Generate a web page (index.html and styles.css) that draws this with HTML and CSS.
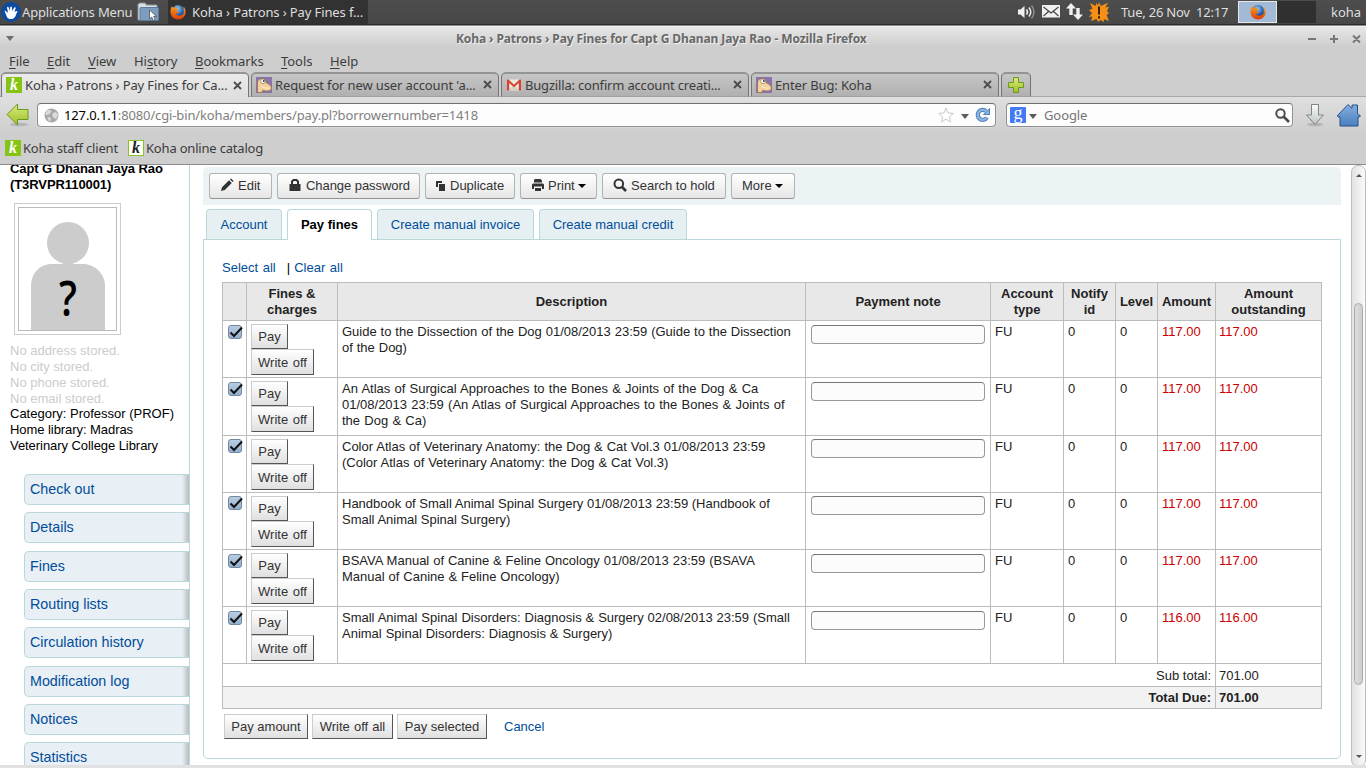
FILE: index.html
```html
<!DOCTYPE html>
<html lang="en">
<head>
  <meta charset="UTF-8" />
  <title>Koha › Patrons › Pay Fines for Capt G Dhanan Jaya Rao</title>
  <link rel="stylesheet" href="styles.css">
</head>
<body>

  <!-- Shared icons -->
  <svg class="defs" width="0" height="0">
    <defs>
      <radialGradient id="fox-blue" cx="45%" cy="30%" r="70%">
        <stop offset="0" stop-color="#8fd0f5" />
        <stop offset="0.6" stop-color="#2a62b5" />
        <stop offset="1" stop-color="#14285f" />
      </radialGradient>
      <linearGradient id="fox-orange" x1="0" y1="0" x2="0" y2="1">
        <stop offset="0" stop-color="#f9a01f" />
        <stop offset="1" stop-color="#d93c0b" />
      </linearGradient>
      <linearGradient id="green" x1="0" y1="0" x2="0" y2="1">
        <stop offset="0" stop-color="#dcea7a" />
        <stop offset="1" stop-color="#9cc02a" />
      </linearGradient>
      <linearGradient id="blue" x1="0" y1="0" x2="0" y2="1">
        <stop offset="0" stop-color="#86aedd" />
        <stop offset="1" stop-color="#4a7fbe" />
      </linearGradient>
      <linearGradient id="silver" x1="0" y1="0" x2="0" y2="1">
        <stop offset="0" stop-color="#fafafa" />
        <stop offset="1" stop-color="#bcc4c4" />
      </linearGradient>
      <symbol id="firefox" viewBox="0 0 16 16">
        <circle cx="8" cy="7.6" r="6.6" fill="url(#fox-blue)" />
        <path d="M1.6 2.2C1 4 .3 6 .5 8.6c.3 4 3.5 7 7.6 7 4.300 0 7.500-3.300 7.500-7.500 0-2.200-.8-4.400-2.200-5.600.7 1.500.8 2.600.6 4 .2 3.500-2 5.400-4.800 5.200-1.800-.1-3-1-3.400-2.300 1 .4 2.300.2 3-.6.5-.5 0-1-.7-1-.9 0-1.400-.5-1.500-1.200L8.300 5.400c.2-.6-.6-.9-1.600-1C6 3.800 6.300 3 7 2.400c-1.200.1-2.200.7-2.800 1.400-.7-.2-1.700-.4-2.600-1.600z" fill="url(#fox-orange)" />
        <path d="M13.400 2.500c.9 1.800 1.200 4 .4 6 .2-2.200 0-4-.4-6z" fill="#fdd835" />
      </symbol>
      <symbol id="bugzilla" viewBox="0 0 16 16">
        <rect width="16" height="16" fill="#8b73ab" />
        <path d="M1.500 15.500V7C1 4 3 1.500 6 1.500c3.500 0 4 2.500 4.500 4.500 3 1 5 3 5 5 0 2.500-2.500 3-5 3l-4-.5-.5 2z" fill="#f3cf9b" stroke="#8a6a45" stroke-width=".7" />
        <circle cx="7" cy="4.300" r="2.300" fill="#fff" stroke="#77684f" stroke-width=".6" />
        <circle cx="7.800" cy="4" r=".9" fill="#333" />
        <path d="M5 8.500c1 2 4 3 8 2.500" fill="none" stroke="#fff0d5" />
      </symbol>
      <symbol id="closex" viewBox="0 0 9 9">
        <path d="M1 1l7 7M8 1L1 8" stroke="#4c4c4c" stroke-width="1.800" />
      </symbol>
    </defs>
  </svg>

  <!-- Desktop panel -->
  <div class="panel">
    <svg class="xfce" width="20" height="20" viewBox="0 0 20 20">
      <circle cx="10" cy="10" r="10" fill="#0c4ba0" />
      <path d="M3.500 9c1-.8 2 .2 2.300 1.200L7 10.500 6 5.800c0-1.200 1.300-1.200 1.700-.2l1.200 3.200.3-3.600c.2-1.100 1.600-1 1.700 0l.2 3.800 2-3.200c.6-.9 1.800-.4 1.500.7l-1.200 3.500 1.900-1c1-.3 1.500.6.900 1.300-1.200 1.300-1.200 5.200-4.200 6.400-2.500.8-5 .2-6-1.700z" fill="#fff" />
    </svg>
    <span class="apps">Applications Menu</span>
    <svg class="folder" width="22" height="20" viewBox="0 0 22 20">
      <path d="M1 18V2.500L2.500 1H8l1.500 2H20v15z" fill="#d9dee0" stroke="#8c9499" />
      <rect x="3" y="5.500" width="18.500" height="13" rx="1" fill="#7d9dbf" stroke="#5a7ba0" />
      <path d="M12.500 8v9l2.200-2 1.600 3.500 1.900-.9-1.600-3.300h3z" fill="#fff" stroke="#444" stroke-width=".7" />
    </svg>
    <div class="task">
      <svg width="16" height="16"><use href="#firefox" /></svg>
      <span class="task-label">Koha › Patrons › Pay Fines f...</span>
    </div>
    <div class="tray">
      <svg width="18" height="16" viewBox="0 0 18 16">
        <path d="M0 5.500h2.500L6.500 2v12L2.500 10.500H0z" fill="#f0f0f0" />
        <path d="M8.500 5.500q2 2.500 0 5M11 3.500q3.500 4.500 0 9" fill="none" stroke="#eee" stroke-width="1.500" />
        <path d="M13.500 1.500q5 6.500 0 13" fill="none" stroke="#8d8d8d" stroke-width="1.500" />
      </svg>
      <svg class="mail" width="18" height="13" viewBox="0 0 18 13">
        <rect width="18" height="12.500" fill="#f1f1f1" />
        <path d="M1.500 2l7.500 6 7.500-6M1.500 11l5-4.500M16.500 11l-5-4.500" fill="none" stroke="#444" stroke-width="1.200" />
      </svg>
      <svg class="net" width="17" height="17" viewBox="0 0 17 17">
        <path d="M5 0l5 5.500H6.700V12H3.300V5.500H0zM12 17l5-5.500h-3.300V5h-3.400v6.500H7z" fill="#f1f1f1" />
      </svg>
      <svg class="alert" width="20" height="20" viewBox="0 0 20 20">
        <path d="M10 0l1.800 4L19 .8l-2.600 4.700 3.600-.8-2 4.300 2 2.200-2.400 1.500 2.200 6.300-5-2 .2 3-3.500-2L9 20l-1.500-3L2 19l1.500-4.500-3.500.5 3-4L0 8l3.500-1.300L1 1l5.500 3L7.500 1 9 3.500z" fill="#f58f16" />
        <path d="M10 4.500v8M10 14.200v2.200" stroke="#3a2300" stroke-width="2" />
      </svg>
      <span class="clock">Tue, 26 Nov&nbsp; 12:17</span>
      <div class="pager">
        <div class="desk active"><svg width="16" height="16"><use href="#firefox" /></svg></div>
        <div class="desk"></div>
      </div>
      <span class="user">koha</span>
    </div>
  </div>

  <!-- Window title and menu -->
  <div class="titlebar">
    <span class="win-menu"></span>
    <span class="win-title">Koha › Patrons › Pay Fines for Capt G Dhanan Jaya Rao - Mozilla Firefox</span>
    <svg class="win-buttons" width="54" height="10" viewBox="0 0 54 10">
      <path d="M1 5h8M23 5h8M27 1v8M46 1.500l7 7M53 1.500l-7 7" stroke="#777" stroke-width="2" fill="none" />
    </svg>
  </div>
  <div class="menubar">
    <span class="m-file"><u>F</u>ile</span>
    <span class="m-edit"><u>E</u>dit</span>
    <span class="m-view"><u>V</u>iew</span>
    <span class="m-history">Hi<u>s</u>tory</span>
    <span class="m-bookmarks"><u>B</u>ookmarks</span>
    <span class="m-tools"><u>T</u>ools</span>
    <span class="m-help"><u>H</u>elp</span>
  </div>

  <!-- Browser tabs -->
  <div class="tabstrip">
    <div class="tab current">
      <span class="k">k</span><span class="tab-label t1">Koha › Patrons › Pay Fines for Ca...</span>
      <svg class="close" width="9" height="9"><use href="#closex" /></svg>
    </div>
    <div class="tab">
      <svg width="16" height="16"><use href="#bugzilla" /></svg><span class="tab-label t2">Request for new user account 'a...</span>
      <svg class="close" width="9" height="9"><use href="#closex" /></svg>
    </div>
    <div class="tab">
      <svg width="16" height="16" viewBox="0 0 16 16">
        <rect x="1" y="2.500" width="14" height="11" fill="#eceadf" />
        <path d="M2 13l6-5 6 5" fill="#d5d2c2" />
        <path d="M1 13.500v-11h1.500L8 7.800l5.500-5.300H15v11h-2.200V6L8 10.200 3.200 6v7.500z" fill="#d8402f" />
      </svg><span class="tab-label t3">Bugzilla: confirm account creati...</span>
      <svg class="close" width="9" height="9"><use href="#closex" /></svg>
    </div>
    <div class="tab">
      <svg width="16" height="16"><use href="#bugzilla" /></svg><span class="tab-label t4">Enter Bug: Koha</span>
      <svg class="close" width="9" height="9"><use href="#closex" /></svg>
    </div>
    <div class="tab new">
      <svg width="16" height="16" viewBox="0 0 16 16">
        <path d="M5.500.5h5v5h5v5h-5v5h-5v-5h-5v-5h5z" fill="url(#green)" stroke="#6a9a17" />
      </svg>
    </div>
  </div>

  <!-- Location bar -->
  <div class="navbar">
    <svg class="back" width="24" height="24" viewBox="0 0 24 24">
      <ellipse cx="13" cy="21.500" rx="9" ry="1.800" fill="#b5b5b5" />
      <path d="M1 11.500L11.500 1v5.500H22v10H11.500V22z" fill="url(#green)" stroke="#699a1c" />
    </svg>
    <div class="urlbar">
      <svg class="globe" width="15" height="15" viewBox="0 0 15 15">
        <circle cx="7.500" cy="7.500" r="7" fill="#a9a9a9" />
        <path d="M3 2.500l3-.5 1.500 1.500L5.500 6 3 7 1.500 6zM9 5l3-1 2 3-2 4-2.500-1.500L8 7.500zM3.500 9l3 .5.5 2.500-2 1.500z" fill="#dcdcdc" />
      </svg>
      <span class="url"><b>127.0.1.1</b>:8080/cgi-bin/koha/members/pay.pl?borrowernumber=1418</span>
      <svg class="star" width="16" height="16" viewBox="0 0 16 16">
        <path d="M8 1l2 5 5.300.4-4 3.500 1.200 5.100L8 12.200 3.500 15l1.200-5.100-4-3.500L6 6z" fill="#fff" stroke="#c9c9c9" />
      </svg>
      <span class="drop"></span>
      <svg class="reload" width="16" height="16" viewBox="0 0 16 16">
        <path d="M12 10.500A5 5 0 1 1 11 4" fill="none" stroke="#4f82bb" stroke-width="4.200" />
        <path d="M15 .8V8H7.500z" fill="#4f82bb" />
        <path d="M12 10.500A5 5 0 1 1 11.500 4.500" fill="none" stroke="#8db5de" stroke-width="2.200" />
        <path d="M14 3v4H10z" fill="#8db5de" />
      </svg>
    </div>
    <div class="search">
      <span class="google">g</span>
      <span class="drop"></span>
      <span class="placeholder">Google</span>
      <svg width="15" height="15" viewBox="0 0 15 15">
        <circle cx="5.500" cy="5.500" r="4.200" fill="none" stroke="#4c4c4c" stroke-width="2" />
        <path d="M8.500 8.500l5.500 5.500" stroke="#4c4c4c" stroke-width="2.600" />
      </svg>
    </div>
    <svg class="download" width="20" height="24" viewBox="0 0 20 24">
      <ellipse cx="10" cy="21.500" rx="8" ry="1.700" fill="#b5b5b5" />
      <path d="M6.500 1.500h7V12h5L10 21.500 1.500 12h5z" fill="url(#silver)" stroke="#7d8585" />
    </svg>
    <svg class="home" width="26" height="24" viewBox="0 0 26 24">
      <path d="M1.500 12.500L12 1.500l4 3.800V2h5.500v8.500l3 2.500-1.500 1h-1v9H4v-9H2z" fill="url(#blue)" stroke="#24508c" />
    </svg>
  </div>
  <div class="bookmarks">
    <span class="k">k</span><span class="b1">Koha staff client</span>
    <span class="k light">k</span><span class="b2">Koha online catalog</span>
  </div>

  <!-- Page -->
  <div class="page">
    <div class="sidebar">
      <h5>Capt G Dhanan Jaya Rao<br>(T3RVPR110001)</h5>
      <div class="photo">
        <svg width="99" height="124" viewBox="0 0 99 124">
          <path d="M13 124V79c0-13 9-22 21-22h31c12 0 22 10 22 22v45z" fill="#ccc" />
          <circle cx="50" cy="36" r="21" fill="#ccc" />
          <rect x="45" y="53" width="10" height="6" fill="#ccc" />
          <text class="mark" transform="translate(50 109) scale(.82 1)" text-anchor="middle">?</text>
        </svg>
      </div>
      <ul class="patron">
        <li class="empty">No address stored.</li>
        <li class="empty">No city stored.</li>
        <li class="empty">No phone stored.</li>
        <li class="empty">No email stored.</li>
        <li class="category">Category: Professor (PROF)</li>
        <li class="library">Home library: Madras<br>Veterinary College Library</li>
      </ul>
      <div class="menu">
        <a>Check out</a>
        <a>Details</a>
        <a>Fines</a>
        <a>Routing lists</a>
        <a>Circulation history</a>
        <a>Modification log</a>
        <a>Notices</a>
        <a>Statistics</a>
      </div>
    </div>

    <div class="main">
      <div class="toolbar">
        <a class="btn b-edit"><svg width="14" height="14" viewBox="0 0 14 14"><path d="M1 13l1-3.800 7-7 2.800 2.800-7 7zM10 1.500l1-1 2.600 2.600-1 1z" fill="#333" /></svg><span>Edit</span></a>
        <a class="btn b-pass"><svg width="14" height="14" viewBox="0 0 14 14"><path d="M1.500 6H12.500v7H1.500z" fill="#333" /><path d="M4 7V3.500L5.500 2h3L10 3.500V7" fill="none" stroke="#333" stroke-width="2" /></svg><span>Change password</span></a>
        <a class="btn b-dup"><svg width="14" height="14" viewBox="0 0 14 14"><path d="M2 3h6v2H4v4H2zM5 6h6v7H5z" fill="#333" /></svg><span>Duplicate</span></a>
        <a class="btn b-print"><svg width="14" height="14" viewBox="0 0 14 14"><path d="M4 1h5.500L11 2.500V4.500H3V2zM2 5.500h10l1 1v4.500h-2V8.500H3V11H1V6.500zM4 10h6v3H4z" fill="#333" /></svg><span>Print</span><i class="caret"></i></a>
        <a class="btn b-search"><svg width="14" height="14" viewBox="0 0 14 14"><circle cx="5.800" cy="5.800" r="4.300" fill="none" stroke="#333" stroke-width="2" /><path d="M9 9l4 4" stroke="#333" stroke-width="2.600" /></svg><span>Search to hold</span></a>
        <a class="btn b-more"><span>More</span><i class="caret"></i></a>
      </div>

      <div class="tabs">
        <a class="w1">Account</a>
        <a class="w2 selected">Pay fines</a>
        <a class="w3">Create manual invoice</a>
        <a class="w4">Create manual credit</a>
      </div>

      <div class="tab-body">
        <p class="checkall"><a>Select all</a><span class="sep">|</span><a>Clear all</a></p>

        <table class="finest">
          <colgroup>
            <col class="c-check"><col class="c-fines"><col class="c-desc"><col class="c-note"><col class="c-type"><col class="c-notify"><col class="c-level"><col class="c-amount"><col class="c-out">
          </colgroup>
          <thead>
            <tr>
              <th></th>
              <th>Fines &amp;<br>charges</th>
              <th>Description</th>
              <th>Payment note</th>
              <th>Account<br>type</th>
              <th>Notify<br>id</th>
              <th>Level</th>
              <th>Amount</th>
              <th>Amount<br>outstanding</th>
            </tr>
          </thead>
          <tbody>
            <tr>
              <td><span class="check"><svg width="17" height="15" viewBox="0 0 17 15"><path d="M2.500 6.500l3.500 3.500L14 1.500" /></svg></span></td>
              <td class="acts"><button class="pay">Pay</button><br><button class="off">Write off</button></td>
              <td class="desc">Guide to the Dissection of the Dog 01/08/2013 23:59 (Guide to the Dissection<br>of the Dog)</td>
              <td class="note"><input type="text"></td>
              <td>FU</td><td>0</td><td>0</td>
              <td class="debit">117.00</td><td class="debit out">117.00</td>
            </tr>
            <tr class="tall">
              <td><span class="check"><svg width="17" height="15" viewBox="0 0 17 15"><path d="M2.500 6.500l3.500 3.500L14 1.500" /></svg></span></td>
              <td class="acts"><button class="pay">Pay</button><br><button class="off">Write off</button></td>
              <td class="desc wide">An Atlas of Surgical Approaches to the Bones &amp; Joints of the Dog &amp; Ca<br>01/08/2013 23:59 (An Atlas of Surgical Approaches to the Bones &amp; Joints of<br>the Dog &amp; Ca)</td>
              <td class="note"><input type="text"></td>
              <td>FU</td><td>0</td><td>0</td>
              <td class="debit">117.00</td><td class="debit out">117.00</td>
            </tr>
            <tr class="raised">
              <td><span class="check"><svg width="17" height="15" viewBox="0 0 17 15"><path d="M2.500 6.500l3.500 3.500L14 1.500" /></svg></span></td>
              <td class="acts"><button class="pay">Pay</button><br><button class="off">Write off</button></td>
              <td class="desc">Color Atlas of Veterinary Anatomy: the Dog &amp; Cat Vol.3 01/08/2013 23:59<br>(Color Atlas of Veterinary Anatomy: the Dog &amp; Cat Vol.3)</td>
              <td class="note"><input type="text"></td>
              <td>FU</td><td>0</td><td>0</td>
              <td class="debit">117.00</td><td class="debit out">117.00</td>
            </tr>
            <tr class="raised">
              <td><span class="check"><svg width="17" height="15" viewBox="0 0 17 15"><path d="M2.500 6.500l3.500 3.500L14 1.500" /></svg></span></td>
              <td class="acts"><button class="pay">Pay</button><br><button class="off">Write off</button></td>
              <td class="desc tight">Handbook of Small Animal Spinal Surgery 01/08/2013 23:59 (Handbook of<br>Small Animal Spinal Surgery)</td>
              <td class="note"><input type="text"></td>
              <td>FU</td><td>0</td><td>0</td>
              <td class="debit">117.00</td><td class="debit out">117.00</td>
            </tr>
            <tr>
              <td><span class="check"><svg width="17" height="15" viewBox="0 0 17 15"><path d="M2.500 6.500l3.500 3.500L14 1.500" /></svg></span></td>
              <td class="acts"><button class="pay">Pay</button><br><button class="off">Write off</button></td>
              <td class="desc">BSAVA Manual of Canine &amp; Feline Oncology 01/08/2013 23:59 (BSAVA<br>Manual of Canine &amp; Feline Oncology)</td>
              <td class="note"><input type="text"></td>
              <td>FU</td><td>0</td><td>0</td>
              <td class="debit">117.00</td><td class="debit out">117.00</td>
            </tr>
            <tr>
              <td><span class="check"><svg width="17" height="15" viewBox="0 0 17 15"><path d="M2.500 6.500l3.500 3.500L14 1.500" /></svg></span></td>
              <td class="acts"><button class="pay">Pay</button><br><button class="off">Write off</button></td>
              <td class="desc">Small Animal Spinal Disorders: Diagnosis &amp; Surgery 02/08/2013 23:59 (Small<br>Animal Spinal Disorders: Diagnosis &amp; Surgery)</td>
              <td class="note"><input type="text"></td>
              <td>FU</td><td>0</td><td>0</td>
              <td class="debit">116.00</td><td class="debit out">116.00</td>
            </tr>
          </tbody>
          <tfoot>
            <tr class="subtotal"><td colspan="8">Sub total:</td><td class="sum">701.00</td></tr>
            <tr class="total"><td colspan="8">Total Due:</td><td class="sum">701.00</td></tr>
          </tfoot>
        </table>

        <div class="action">
          <button class="a1">Pay amount</button>
          <button class="a2">Write off all</button>
          <button class="a3">Pay selected</button>
          <a class="cancel">Cancel</a>
        </div>
      </div>
    </div>

    <div class="scrollbar">
      <span class="up"></span>
      <span class="thumb"></span>
      <span class="down"></span>
    </div>
  </div>
  <div class="statusline"></div>

</body>
</html>
```

FILE: styles.css
```css
* {
  box-sizing: border-box;
}

body {
  margin: 0;
  width: 1366px;
  height: 768px;
  overflow: hidden;
  background-color: #cecece;
  color: #3c3c3c;
  font-family: "Noto Sans", "Open Sans", sans-serif;
  font-size: 13px;
  white-space: nowrap;
}

svg {
  display: block;
  flex: none;
}

.defs {
  position: absolute;
}

/* desktop panel */
.panel {
  display: flex;
  align-items: center;
  height: 26px;
  padding-bottom: 2px;
  background: linear-gradient(#4d4d4d, #474747);
  border-bottom: 1px solid #8a8a8a;
  box-shadow: inset 0 -1px #2c2c2c;
  color: #dfdfdf;
}

.xfce {
  margin-left: 1px;
}

.apps {
  width: 116px;
  padding-left: 1px;
  letter-spacing: -0.170px;
}

.folder {
  margin-right: 9px;
}

.task {
  display: flex;
  align-items: center;
  gap: 6px;
  width: 200px;
  height: 24px;
  padding-left: 2px;
  background-color: #323232;
}

.task-label {
  letter-spacing: -0.120px;
}

.tray {
  display: flex;
  align-items: center;
  margin-left: auto;
}

.mail {
  margin-left: 6px;
}

.net {
  margin-left: 6px;
}

.alert {
  margin-left: 6px;
}

.clock {
  width: 117px;
  margin-left: 12px;
  letter-spacing: -0.220px;
}

.pager {
  display: flex;
}

.desk {
  display: flex;
  align-items: center;
  justify-content: center;
  width: 39px;
  height: 22px;
  background-color: #303030;
}

.desk.active {
  background-color: #a3bad6;
  border: 1px solid #e8e8e8;
}

.user {
  width: 35px;
  margin-left: 15px;
}

/* title bar */
.titlebar {
  display: flex;
  align-items: center;
  height: 24px;
  padding: 0 5px 0 6px;
  background: linear-gradient(#e6e6e6, #cecece 20px);
  border-top: 1px solid #f3f3f3;
}

.win-menu {
  border: 4px solid transparent;
  border-top: 5px solid #6d6d6d;
  border-bottom: 0;
}

.win-title {
  flex: 1;
  padding-left: 442px;
  font-size: 12px;
  font-weight: bold;
  letter-spacing: -0.100px;
  color: #686868;
  text-shadow: 1px 1px #eee;
}

.menubar {
  display: flex;
  align-items: center;
  height: 22px;
  padding-left: 9px;
  letter-spacing: -0.050px;
}

.menubar u {
  text-underline-offset: 2px;
}

.m-file { width: 38px; }
.m-edit { width: 41px; }
.m-view { width: 46px; }
.m-history { width: 61px; }
.m-bookmarks { width: 86px; }
.m-tools { width: 49px; }

/* browser tabs */
.tabstrip {
  display: flex;
  gap: 2px;
  height: 25px;
  padding-left: 1px;
  box-shadow: inset 0 -1px #a9a9a9;
}

.tab {
  display: flex;
  align-items: center;
  width: 248px;
  padding: 0 6px 1px 4px;
  border: 1px solid #747474;
  border-top: 2px solid #949494;
  border-bottom-color: #a0a0a0;
  border-radius: 5px 5px 0 0;
  background: linear-gradient(#c6c6c6, #b0b0b0);
}

.tab.current {
  background: linear-gradient(#ebebeb, #dedede);
  border-bottom: 0;
}

.tab.new {
  width: 30px;
  padding-left: 6px;
}

.tab-label {
  margin-left: 3px;
  letter-spacing: -0.130px;
}

.t3 {
  letter-spacing: -0.180px;
}

.tab .close {
  margin-left: auto;
}

.k {
  width: 16px;
  height: 16px;
  flex: none;
  background-color: #86c414;
  color: #fff;
  font: italic bold 16px/15px "Liberation Serif", serif;
  text-align: center;
}

.k.light {
  background-color: #fff;
  border: 1px solid #8bc425;
  color: #222;
  line-height: 13px;
}

/* location bar */
.navbar {
  display: flex;
  align-items: center;
  height: 36px;
  padding-left: 6px;
  background: linear-gradient(#dfdfdf, #cecece);
}

.urlbar,
.search {
  display: flex;
  align-items: center;
  height: 24px;
  background-color: #fdfdfd;
  border: 1px solid #8f8f8f;
  border-top-color: #6f6f6f;
  border-radius: 4px;
  box-shadow: 0 0 0 1px #dadada;
}

.urlbar {
  width: 959px;
  margin-left: 7px;
  padding: 0 4px 0 6px;
}

.url {
  margin-left: 5px;
  color: #7f7f7f;
  letter-spacing: -0.135px;
}

.url b {
  font-weight: normal;
  color: #000;
}

.star {
  margin-left: auto;
}

.drop {
  border: 4px solid transparent;
  border-top: 5px solid #5c5c5c;
  border-bottom: 0;
}

.urlbar .drop {
  margin: 2px 6px 0 7px;
}

.search {
  width: 287px;
  margin-left: 10px;
  padding: 0 2px 0 3px;
}

.google {
  width: 16px;
  height: 16px;
  border-radius: 1px;
  background-color: #4279f5;
  color: #fff;
  font: 18px/12px "Liberation Serif", serif;
  text-align: center;
}

.search .drop {
  margin: 2px 7px 0 3px;
}

.placeholder {
  flex: 1;
  color: #757575;
  letter-spacing: -0.100px;
}

.download {
  margin-left: 12px;
}

.home {
  margin-left: 11px;
}

.bookmarks {
  display: flex;
  align-items: center;
  height: 32px;
  padding: 0 0 1px 5px;
  border-bottom: 1px solid #8c8c8c;
  letter-spacing: -0.190px;
}

.b1 {
  width: 105px;
  margin-left: 2px;
}

.b2 {
  margin-left: 2px;
}

/* page area */
.page {
  display: flex;
  height: 600px;
  overflow: hidden;
  background-color: #fff;
  color: #000;
  font-family: "Liberation Sans", Arial, sans-serif;
  font-size: 13px;
  line-height: 16px;
}

.page a {
  color: #004d99;
}

.sidebar {
  width: 190px;
  border-right: 1px solid #b9d8d9;
}

.sidebar h5 {
  margin: -4px 0 10px 10px;
  font-size: 13px;
  letter-spacing: -0.080px;
}

.photo {
  width: 107px;
  height: 132px;
  margin-left: 14px;
  padding: 3px;
  border: 1px solid #ccc;
}

.photo svg {
  width: 99px;
  height: 124px;
  outline: 1px solid #bbb;
  outline-offset: -1px;
}

.mark {
  font-family: "Open Sans", sans-serif;
  font-size: 48px;
  font-weight: 600;
}

.patron {
  height: 110px;
  margin: 8px 0 0 10px;
  padding: 0;
  list-style: none;
}

.patron .empty {
  color: #ccc;
}

.patron .category {
  margin-top: -1px;
}

.library {
  letter-spacing: -0.060px;
}

.menu {
  display: flex;
  flex-direction: column;
  gap: 7.350px;
  margin: 21px 0 0 24px;
}

.menu a {
  flex: none;
  height: 31px;
  padding-left: 5px;
  border: 1px solid #b9d8d9;
  border-right: 0;
  border-radius: 5px 0 0 5px;
  background: linear-gradient(to left, #b8bcc0, #e8eff5 7px);
  font-size: 14.3px;
  line-height: 29px;
}

.main {
  width: 1138px;
  margin-left: 13px;
}

.toolbar {
  display: flex;
  gap: 5px;
  height: 38px;
  margin-top: 2px;
  padding: 6px;
  background-color: #ebf3f4;
  border-radius: 5px 5px 0 0;
}

.btn {
  display: flex;
  align-items: center;
  height: 26px;
  padding-left: 10px;
  border: 1px solid #b3b3b3;
  border-bottom-color: #939393;
  border-radius: 3px;
  background: linear-gradient(#fff, #e6e6e6);
}

.page .btn {
  color: #333;
}

.btn svg {
  margin: 0 4px 2px 0;
}

.b-edit { width: 63px; }
.b-pass { width: 143px; letter-spacing: -0.060px; }
.b-dup { width: 90px; padding-left: 8px; }
.b-print { width: 77px; }
.b-search { width: 124px; }
.b-more { width: 64px; }

.b-dup svg {
  margin-right: 2px;
}

.b-print svg {
  margin-right: 3px;
}

.caret {
  margin-left: 3px;
  border: 4px solid transparent;
  border-top-color: #000;
  border-bottom: 0;
}

.tabs {
  display: flex;
  gap: 5px;
  height: 31px;
  margin: 4px 0 -1px 3px;
  position: relative;
}

.tabs a {
  height: 30px;
  border: 1px solid #b9d8d9;
  border-bottom: 0;
  border-radius: 4px 4px 0 0;
  background-color: #e6f0f2;
  text-align: center;
  line-height: 30px;
}

.tabs .selected {
  height: 31px;
  background-color: #fff;
  color: #000;
  font-weight: bold;
}

.w1 { width: 76px; }
.w2 { width: 85px; }
.w3 { width: 157px; }
.w4 { width: 148px; }

.tab-body {
  height: 520px;
  padding: 20px 18px 0;
  border: 1px solid #b9d8d9;
  border-radius: 0 0 5px 5px;
}

.checkall {
  margin: 0 0 6px;
  word-spacing: 1px;
}

.sep {
  margin: 0 4px 0 11px;
}

/* fines table */
.finest {
  table-layout: fixed;
  width: 1100px;
  border-collapse: collapse;
  color: #222;
}

.c-check { width: 24px; }
.c-fines { width: 91px; }
.c-desc { width: 468px; }
.c-note { width: 185px; }
.c-type { width: 73px; }
.c-notify { width: 52px; }
.c-level { width: 42px; }
.c-amount { width: 58px; }
.c-out { width: 106px; }

.finest th,
.finest td {
  padding: 3px 0 0 4px;
  border: 1px solid #bcbcbc;
  text-align: left;
  vertical-align: top;
}

.finest th {
  height: 38px;
  padding: 0;
  background-color: #e8e8e8;
  text-align: center;
  vertical-align: middle;
}

.finest tbody tr {
  height: 57px;
}

.finest tbody .tall {
  height: 58px;
}

.finest .debit {
  color: #c00;
}

.finest .out,
.finest .sum {
  padding-left: 3px;
}

.desc {
  word-spacing: 0.300px;
}

.desc.wide {
  word-spacing: 0.620px;
}

.desc.tight {
  word-spacing: 0;
}

.finest .acts {
  padding: 3px 0 0 4px;
  line-height: 0;
}

button {
  height: 26px;
  padding: 0;
  border: 1px solid #ccc;
  border-right-color: #555;
  border-bottom-color: #555;
  background: linear-gradient(#fff, #e0e0e0);
  color: #333;
  font-family: inherit;
  font-size: 13px;
  vertical-align: top;
}

.pay {
  width: 37px;
  height: 25px;
}

.off {
  width: 63px;
  word-spacing: 1px;
}

.check {
  display: block;
  width: 14px;
  height: 14px;
  margin: 1px 0 0 1px;
  border: 1px solid #7288a1;
  border-radius: 3px;
  background: linear-gradient(#b9cde2, #94b0ce);
}

.check svg {
  margin: 0 0 0 -1px;
  overflow: visible;
}

.check path {
  fill: none;
  stroke: #111;
  stroke-width: 2;
}

.finest .note {
  padding: 4px 0 0 5px;
}

.raised .check {
  margin-top: 0;
}

.finest .raised .note {
  padding-top: 3px;
}

.note input {
  display: block;
  width: 174px;
  height: 19px;
  padding: 0 3px;
  border: 1px solid #999;
  border-top-color: #777;
  border-radius: 4px;
  background-color: #fcfcfc;
}

.finest tfoot td {
  height: 23px;
  padding-top: 4px;
}

.finest tfoot .total td {
  height: 22px;
  padding-top: 3px;
  background-color: #f2f2f2;
  font-weight: bold;
}

.finest tfoot td:first-child {
  padding-right: 4px;
  text-align: right;
}

.action {
  display: flex;
  gap: 4px;
  margin: 5px 0 0 2px;
}

.action button {
  height: 25px;
}

.a1 { width: 84px; }
.a2 { width: 81px; word-spacing: 0.500px; }
.a3 { width: 90px; }

.cancel {
  margin: 5px 0 0 13px;
}

/* scrollbar */
.scrollbar {
  display: flex;
  flex-direction: column;
  align-items: center;
  width: 15px;
  height: 602px;
  margin-left: auto;
  padding: 8px 0;
  border: 1px solid #bdbdbd;
  border-radius: 7px;
  background: linear-gradient(to right, #e2e2e2, #fafafa);
}

.up,
.down {
  border: 3px solid transparent;
}

.up {
  border-top: 0;
  border-bottom-color: #555;
}

.down {
  margin-top: auto;
  border-bottom: 0;
  border-top-color: #555;
}

.thumb {
  width: 9px;
  height: 382px;
  margin-top: 126px;
  border: 1px solid #aaa;
  border-radius: 5px;
  background: linear-gradient(to right, #ddd, #ccc);
}

.statusline {
  height: 3px;
  background-color: #e1e1e1;
}
```
